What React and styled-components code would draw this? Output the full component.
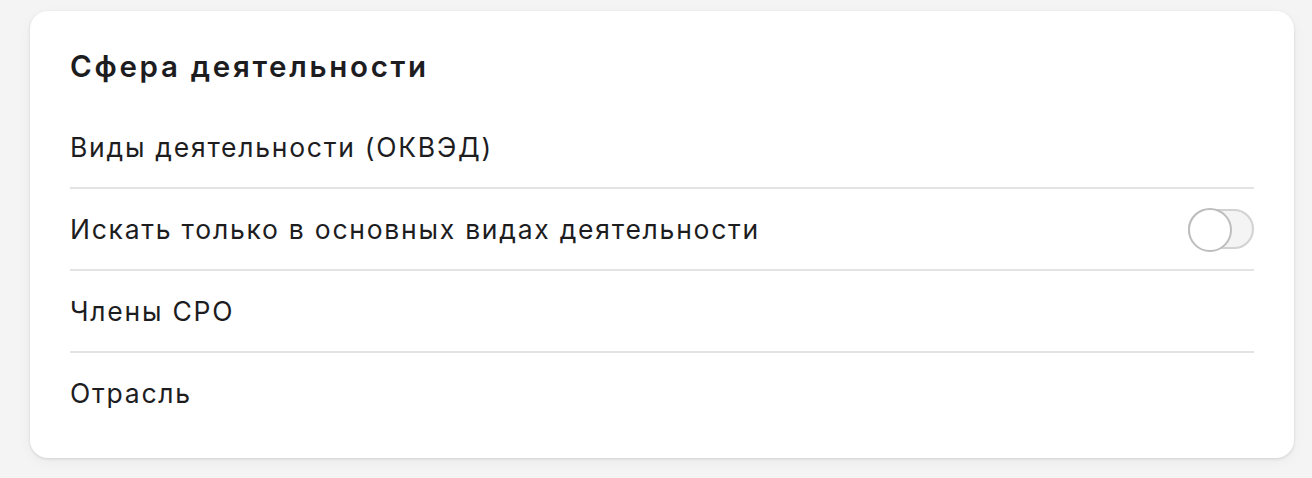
import React, { useState } from "react";
import styled, { createGlobalStyle } from "styled-components";

const Global = createGlobalStyle`
  html, body { margin: 0; padding: 0; background: #f4f4f4; }
  body { font-family: Inter, "Noto Sans", sans-serif; color: #1d1d1f; }
`;

const Page = styled.div`
  padding: 11px 18px 20px 30px;
`;

const Card = styled.section`
  background: #fff;
  border-radius: 18px;
  box-shadow: 0 1px 3px rgba(0, 0, 0, 0.12), 0 4px 14px rgba(0, 0, 0, 0.04);
  padding: 37px 40px 25px 40px;
`;

const Title = styled.h2`
  margin: 0 0 23px 0;
  font-size: 29.5px;
  line-height: 36px;
  font-weight: 600;
  letter-spacing: 2.7px;
`;

const Row = styled.div`
  display: flex;
  align-items: center;
  justify-content: space-between;
  height: 80px;
  border-bottom: ${(p) => (p.$last ? "none" : "2px solid #e3e3e3")};
  font-size: 26.5px;
  font-weight: 400;
  letter-spacing: 1.75px;
`;

const Track = styled.button`
  position: relative;
  width: 66px;
  height: 40px;
  padding: 0;
  border-radius: 20px;
  border: 2px solid #d2d2d2;
  background: #f4f4f4;
  cursor: pointer;
`;

const Knob = styled.span`
  position: absolute;
  top: -3px;
  left: -2px;
  width: 40px;
  height: 40px;
  border-radius: 50%;
  background: #fff;
  border: 2px solid #bdbdbd;
`;

export default function App() {
  const [on, setOn] = useState(false);
  return (
    <>
      <Global />
      <Page>
        <Card>
          <Title>Сфера деятельности</Title>
          <Row>Виды деятельности (ОКВЭД)</Row>
          <Row>
            Искать только в основных видах деятельности
            <Track onClick={() => setOn(!on)} aria-pressed={on}>
              <Knob />
            </Track>
          </Row>
          <Row>Члены СРО</Row>
          <Row $last>Отрасль</Row>
        </Card>
      </Page>
    </>
  );
}
